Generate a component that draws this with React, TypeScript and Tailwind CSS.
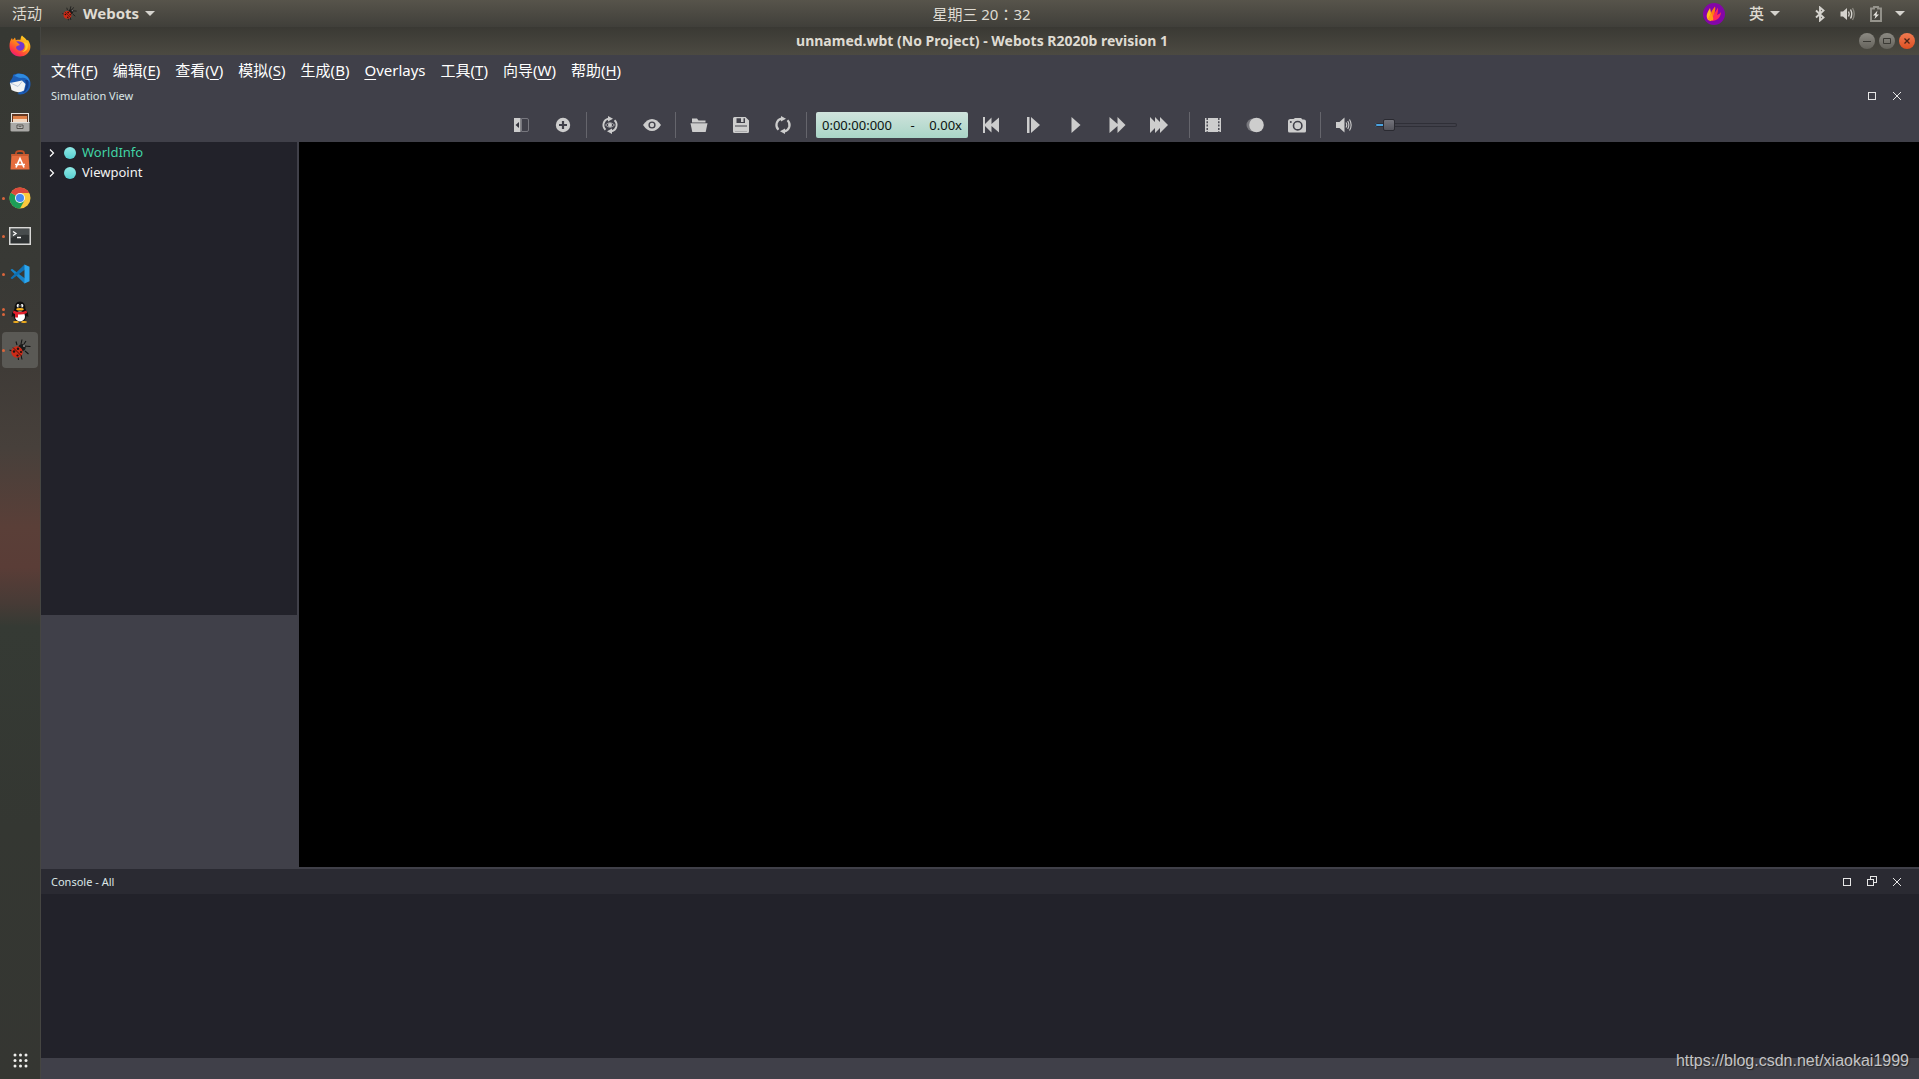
import type { ReactNode } from "react";

const menus = [
  { label: "文件", hotkey: "F" },
  { label: "编辑", hotkey: "E" },
  { label: "查看", hotkey: "V" },
  { label: "模拟", hotkey: "S" },
  { label: "生成", hotkey: "B" },
  { label: "Overlays", hotkey: "" },
  { label: "工具", hotkey: "T" },
  { label: "向导", hotkey: "W" },
  { label: "帮助", hotkey: "H" },
];

const Ladybug = ({ size }: { size: number }) => (
  <svg width={size} height={size} viewBox="0 0 22 22">
    <g stroke="#151515" strokeWidth="1.1" fill="none">
      <path d="M8 6 7 2.5 M12 5 13 0.5 M15 7 21.5 7.5 M16 12 19.5 15 M12 16 13 20.5 M3 12 0.5 11 M9 17 9.5 21 M15 5 17 2" />
    </g>
    <circle cx="13" cy="8.5" r="3.6" fill="#1b1b1b" />
    <circle cx="8" cy="13" r="5.8" fill="#cf2a17" />
    <path d="M4 8.5 12.5 17" stroke="#3a0d08" strokeWidth="0.9" />
    <g fill="#1b1210">
      <circle cx="5" cy="12.5" r="1.2" />
      <circle cx="9" cy="9.8" r="1.2" />
      <circle cx="8.5" cy="16.5" r="1.1" />
      <circle cx="12" cy="13" r="1.1" />
    </g>
    <path d="M9.5 7 Q15 6.5 14 12.5 Q13 8.5 9.5 7Z" fill="#1b1b1b" />
    <circle cx="15" cy="7" r="0.8" fill="#ddd" />
  </svg>
);

const Firefox = () => (
  <svg width="22" height="22" viewBox="0 0 22 22">
    <defs>
      <linearGradient id="fox" x1="0.85" y1="0" x2="0.2" y2="1">
        <stop offset="0" stopColor="#ffe226" />
        <stop offset="0.45" stopColor="#ff8a16" />
        <stop offset="0.8" stopColor="#ff3647" />
        <stop offset="1" stopColor="#e31587" />
      </linearGradient>
    </defs>
    <path
      d="M13 0.5C14.5 2 16.5 3.5 18 5.5L19 5C21 8 21.7 10.5 21.3 13C20.3 18.3 16 21.5 11 21.5C5 21.5 0.5 17 0.5 11C0.5 7.5 1.3 5 3 3L3.8 5L6 2.5L6.8 5.2C8.5 4.5 10 4.7 11.5 4.8C11.7 3 12 1.5 13 0.5Z"
      fill="url(#fox)"
    />
    <path d="M7 6.5 Q11 5.5 14.5 8 Q17 12 13.5 15 Q10 17 7.3 13.5 Q6.5 11.5 8 11 L11 10 Q9 7.5 7 6.5Z" fill="#7138cf" />
    <path d="M14 7C18 10 17 15.5 13 16.8C17.5 17 20 13 18.5 8Z" fill="#ffce2b" />
  </svg>
);

const Thunderbird = () => (
  <svg width="22" height="22" viewBox="0 0 22 22">
    <path d="M4 2C8-0.5 15 0 19 4C22.5 8 22.5 15 18 19C15 21.5 11 22 8 21C14 19 3 14 1 11C0 8 4 6 4 2Z" fill="#1c5cb4" />
    <path d="M8 1C14 0 20 3 20.5 9C18 5 15 4 12 5C9 5 7 3 5 3Z" fill="#2f8be0" />
    <path d="M19 7C21 13 18 18 14 20C17 15 18 11 16 7Z" fill="#143f8c" />
    <path d="M1 10 13 7.5 16.5 11 15 17.5Q9 21 2.5 17Z" fill="#f3f3f3" />
    <path d="M1.5 10 9 13.5 13.5 8" fill="none" stroke="#b9c7da" />
  </svg>
);

const Files = () => (
  <svg width="20" height="20" viewBox="0 0 20 20">
    <path d="M1 1H19V11H1Z" fill="#e4e2df" />
    <path d="M2 2H18V11H2Z" fill="#623823" />
    <path d="M3 4H17V11H3Z" fill="#e08149" />
    <path d="M3 7H17V11H3Z" fill="#f3d8c0" />
    <path d="M0.5 10H19.5V18.5Q19.5 19.5 18 19.5H2Q0.5 19.5 0.5 18.5Z" fill="#aaa9a6" />
    <path d="M0.5 10H19.5V11H0.5Z" fill="#deddda" />
    <path d="M7 13H13V16.5H7Z" fill="#c6c5c3" stroke="#55534f" />
    <path d="M8.5 14.7H11.5" stroke="#55534f" />
  </svg>
);

const Software = () => (
  <svg width="20" height="20" viewBox="0 0 20 20">
    <path d="M6 6V3Q6 1 10 1Q14 1 14 3V6" fill="none" stroke="#c14f25" strokeWidth="1.8" />
    <path d="M1.5 4H18.5L19.5 19.5H0.5Z" fill="#e66d3e" />
    <path d="M1.3 6H18.7L18.5 4H1.5Z" fill="#c95a30" />
    <path d="M6 17.5 10 8.5 14 17.5M5 14.5H15" fill="none" stroke="#fff" strokeWidth="1.7" />
  </svg>
);

const Chrome = () => (
  <svg width="22" height="22" viewBox="0 0 22 22">
    <circle cx="11" cy="11" r="10.5" fill="#fbc93d" />
    <path d="M11 11 1.9 5.7A10.5 10.5 0 0 0 11 21.5L15.5 13.5Z" fill="#1d9d57" />
    <path d="M11 11 1.9 5.7A10.5 10.5 0 0 1 20.3 6H11Z" fill="#dc4a3d" />
    <circle cx="11" cy="11" r="5" fill="#f4f4f4" />
    <circle cx="11" cy="11" r="4" fill="#4587f0" />
  </svg>
);

const Terminal = () => (
  <svg width="22" height="18" viewBox="0 0 22 18">
    <path d="M0 0H22V18H0Z" fill="#d8d8d6" />
    <path d="M1.5 1.5H20.5V16.5H1.5Z" fill="#2e3233" />
    <path d="M2 2H20V8Q11 7 2 11Z" fill="#474c4d" />
    <path d="M4 4.5 7 6.5 4 8.5M8 10.5H12" fill="none" stroke="#fff" strokeWidth="1.3" />
  </svg>
);

const VsCode = () => (
  <svg width="20" height="20" viewBox="0 0 20 20">
    <path d="M0.5 6 2 4.7 15 14.5V19.5L14 19Z" fill="#1783c7" />
    <path d="M0.5 14 2 15.3 15 5.5V0.5L14 1Z" fill="#0f70b3" />
    <path d="M14.5 0.5 19.5 2.7V17.3L14.5 19.5Z" fill="#2ca6ee" />
  </svg>
);

const Penguin = () => (
  <svg width="20" height="22" viewBox="0 0 20 22">
    <path d="M10 0.5Q15.5 0.5 15.5 8Q18.5 11.5 18.5 16L16.5 15Q16 20.5 10 20.5Q4 20.5 3.5 15L1.5 16Q1.5 11.5 4.5 8Q4.5 0.5 10 0.5Z" fill="#101010" />
    <ellipse cx="10" cy="15.5" rx="5" ry="5" fill="#fff" />
    <ellipse cx="8" cy="4.8" rx="1.3" ry="1.8" fill="#fff" />
    <ellipse cx="12" cy="4.8" rx="1.3" ry="1.8" fill="#fff" />
    <circle cx="8.4" cy="5" r="0.6" />
    <circle cx="11.6" cy="5" r="0.6" />
    <ellipse cx="10" cy="8.3" rx="3.8" ry="1.2" fill="#f6b01c" />
    <path d="M3.5 9.5Q10 12.5 16.5 9.5L17 12Q13 14 8 13.5V16.5H5V13L3 12Z" fill="#e0202c" />
    <ellipse cx="6" cy="21" rx="3" ry="1" fill="#f6b01c" />
    <ellipse cx="14" cy="21" rx="3" ry="1" fill="#f6b01c" />
  </svg>
);

const dock = [
  { name: "Firefox", icon: <Firefox />, windows: 0 },
  { name: "Thunderbird", icon: <Thunderbird />, windows: 0 },
  { name: "Files", icon: <Files />, windows: 0 },
  { name: "Software", icon: <Software />, windows: 0 },
  { name: "Chrome", icon: <Chrome />, windows: 1 },
  { name: "Terminal", icon: <Terminal />, windows: 1 },
  { name: "VS Code", icon: <VsCode />, windows: 1 },
  { name: "QQ", icon: <Penguin />, windows: 2 },
  { name: "Webots", icon: <Ladybug size={22} />, windows: 1, active: true },
];

const Caret = () => (
  <svg width="10" height="5" viewBox="0 0 10 5">
    <path d="M0 0H10L5 5Z" fill="#d5d3ce" />
  </svg>
);

const TopBar = () => (
  <header className="flex h-[27px] shrink-0 items-center bg-linear-to-b from-[#57544b] to-[#403f3a] text-[#dfdbd2]">
    <div className="flex flex-1 items-center">
      <button className="pl-3 text-[15px]">活动</button>
      <button className="ml-5 flex items-center font-bold">
        <Ladybug size={15} />
        <span className="mx-[6px] text-[15px]">Webots</span>
        <Caret />
      </button>
    </div>
    {/* the clock is centred over the window, a little right of the bar's middle */}
    <button className="ml-[58px] pt-px font-['Noto_Sans','Noto_Sans_CJK_JP',sans-serif] text-[15px] leading-5">星期三 20：32</button>
    <div className="flex flex-1 items-center justify-end pr-[14px]">
      <button aria-label="Flame" className="mr-6">
        <svg width="22" height="22" viewBox="0 0 22 22">
          <circle cx="11" cy="11" r="11" fill="#8406a8" />
          <path d="M5 17C2 12 5 9 7 5C8 9 8 12 9 14L8 18Z" fill="#ffc21a" />
          <path d="M7 17C6 12 9 7 12 3.5C13 7 11 9 12 12L11 17Z" fill="#ff7a12" />
          <path d="M9 18C9 13 13 8 15 4.500C15 8 15 9 14 12C15 11 17 11 18 9C18 14 14 18 9 18Z" fill="#ff2a5c" />
          <path d="M5 16C6 12 8 12 9 10C9 14 11 14 10 17Q7 19 5 16Z" fill="#ff9d14" />
        </svg>
      </button>
      <button className="flex items-center gap-[6px] text-[15px] font-medium">
        英
        <Caret />
      </button>
      <button aria-label="System" className="ml-[35px] flex items-center">
        <svg width="10" height="16" viewBox="0 0 10 16">
          <path d="M1 4.500 8.500 11.500 5 14.500V1.500L8.500 4.500 1 11.500" fill="none" stroke="#d5d3ce" strokeWidth="1.900" />
        </svg>
        <svg className="ml-[15px]" width="16" height="14" viewBox="0 0 16 14">
          <path d="M0.500 4.500H3L7 1V13L3 9.500H0.500Z" fill="#d5d3ce" />
          <path d="M8.500 4.500Q10 7 8.500 9.500M10.500 2.500Q13 7 10.500 11.500" fill="none" stroke="#d5d3ce" strokeWidth="1.400" />
          <path d="M12.500 1Q16 7 12.500 13" fill="none" stroke="#85837c" strokeWidth="1.400" />
        </svg>
        <svg className="ml-[14px]" width="12" height="16" viewBox="0 0 12 16">
          <path d="M1 2.500H4V1H8V2.500H11V15H1Z" fill="none" stroke="#96948d" strokeWidth="1.900" />
          <path d="M7.500 4.500 3 9.500H5.500L4.500 13 9 8.500H6.500Z" fill="#e5e3de" />
        </svg>
        <span className="ml-[13px]">
          <Caret />
        </span>
      </button>
    </div>
  </header>
);

const Dock = () => (
  <nav className="flex w-[41px] shrink-0 flex-col gap-[2px] border-r border-[#454541] bg-[linear-gradient(#363833_0px,#383935_240px,#3f3b37_340px,#47403b_420px,#5a3f38_500px,#5a3d37_540px,#483b36_575px,#353a34_600px,#343732_800px,#353632_100%)] pt-px">
    {dock.map((app) => (
      <button
        key={app.name}
        aria-label={app.name}
        className={`relative ml-[2px] flex size-9 items-center justify-center rounded ${app.active ? "bg-[#5a5955]" : ""}`}
      >
        {app.icon}
        <span className="absolute left-0 flex flex-col gap-[2px]">
          {Array.from({ length: app.windows }, (_, i) => (
            <span key={i} className="size-[3px] rounded-full bg-[#d9653b]" />
          ))}
        </span>
      </button>
    ))}
    <button aria-label="Show Applications" className="mt-auto mb-2 ml-[2px] flex h-[22px] w-9 items-center justify-center">
      <svg width="15" height="15" viewBox="0 0 15 15" fill="#f0f0ee">
        {[2, 7.5, 13].map((y) => [2, 7.5, 13].map((x) => <circle key={`${x}-${y}`} cx={x} cy={y} r="1.5" />))}
      </svg>
    </button>
  </nav>
);

const TitleBar = () => (
  <div className="flex h-7 shrink-0 items-center bg-linear-to-b from-[#3a3934] to-[#4c4a42] pr-1 pl-2">
    <div className="flex-1" />
    <h1 className="text-sm font-bold text-[#dfdbd2]">unnamed.wbt (No Project) - Webots R2020b revision 1</h1>
    <div className="flex flex-1 justify-end gap-1">
      <button aria-label="Minimize" className="flex size-4 items-center justify-center rounded-full bg-linear-to-b from-[#8c8a83] to-[#65635c]">
        <svg width="16" height="16" viewBox="0 0 16 16">
          <path d="M4 8.5H12" stroke="#3a3934" />
        </svg>
      </button>
      <button aria-label="Maximize" className="flex size-4 items-center justify-center rounded-full bg-linear-to-b from-[#8c8a83] to-[#65635c]">
        <svg width="16" height="16" viewBox="0 0 16 16">
          <path d="M4.5 5.5H11.5V10.5H4.5Z" fill="none" stroke="#3a3934" />
        </svg>
      </button>
      <button aria-label="Close" className="flex size-4 items-center justify-center rounded-full bg-linear-to-b from-[#f07a50] to-[#dd4f20]">
        <svg width="16" height="16" viewBox="0 0 16 16">
          <path d="M5.5 5.5 10.5 10.5M10.5 5.5 5.5 10.5" stroke="#4a2416" strokeWidth="1.3" />
        </svg>
      </button>
    </div>
  </div>
);

const PanelButton = ({ label, children }: { label: string; children: ReactNode }) => (
  <button aria-label={label}>
    <svg width="11" height="11" viewBox="0 0 11 11" fill="none" stroke="#e6e6e6" shapeRendering="crispEdges">
      {children}
    </svg>
  </button>
);

const squarePath = <path d="M1.5 2.5H8.5V9.5H1.5Z" />;
const crossPath = <path d="M1 2 9 10M9 2 1 10" shapeRendering="auto" />;

const ToolButton = ({ label, children }: { label: string; children: ReactNode }) => (
  <button aria-label={label} className="flex h-[26px] w-[42px] items-center justify-center">
    <svg width="18" height="18" viewBox="0 0 18 18" fill="#cdcdcd">
      {children}
    </svg>
  </button>
);

const Separator = () => <div className="mx-[2px] h-[26px] w-px bg-[#65656c]" />;

const Toolbar = () => (
  <div className="flex h-[34px] items-center justify-center pr-[3px]">
    <ToolButton label="Hide scene tree">
      <path d="M2 2H8.5V16H2Z" />
      <path d="M7 6V12L3.5 9Z" fill="#33333b" />
      <path d="M9.5 2.5H15Q16.500 2.500 16.500 4V14Q16.500 15.500 15 15.500H9.500Z" fill="none" stroke="#77777e" />
    </ToolButton>
    <ToolButton label="Add">
      <circle cx="9" cy="9" r="7.2" />
      <path d="M9 5V13M5 9H13" stroke="#404049" strokeWidth="2.2" />
    </ToolButton>
    <Separator />
    <ToolButton label="Restore viewpoint">
      <path d="M7.5 2.6A6.5 6.5 0 0 0 4.5 13.7M10.5 15.4A6.5 6.5 0 0 0 13.5 4.3" fill="none" stroke="#cdcdcd" strokeWidth="1.9" />
      <path d="M7 0 12 2.8 7 5.6ZM11 12.4V18L6 15.2Z" />
      <path d="M4.5 9Q9 4.5 13.5 9Q9 13.5 4.5 9Z" fill="none" stroke="#a5a5aa" />
      <circle cx="9" cy="9" r="2" />
    </ToolButton>
    <ToolButton label="View">
      <path d="M0 9Q4 3 9 3T18 9Q14 15 9 15T0 9Z" />
      <circle cx="9" cy="9" r="3.6" fill="#404049" />
      <circle cx="9" cy="9" r="2.2" />
    </ToolButton>
    <Separator />
    <ToolButton label="Open world">
      <path d="M2 2.5H7L8.5 4.5H15.5V6.500H2Z" />
      <path d="M0.5 7.3H17.5L15.7 16H2.3Z" />
    </ToolButton>
    <ToolButton label="Save world">
      <path fillRule="evenodd" d="M2.5 1H13.5L17 4.5V15.5Q17 17 15.5 17H2.5Q1 17 1 15.5V2.5Q1 1 2.5 1ZM4.5 2.2V7H13V2.2ZM3 9.5V15.5H15V9.5Z" />
      <path d="M9 2H11.5V6H9ZM3 10.5H15V15.5H3Z" />
    </ToolButton>
    <ToolButton label="Reload world">
      <path d="M7.5 2.6A6.5 6.5 0 0 0 4.5 13.7M10.5 15.4A6.5 6.5 0 0 0 13.5 4.3" fill="none" stroke="#cdcdcd" strokeWidth="2.2" />
      <path d="M7 0 12 2.8 7 5.6ZM11 12.4V18L6 15.2Z" />
    </ToolButton>
    <Separator />
    <div className="mr-[2px] ml-[7px] flex h-[26px] w-[152px] items-center justify-between rounded-xs bg-linear-to-b from-[#cfe3dc] to-[#a9d5c7] px-[6px] pt-[2px] text-[13px] text-[#0c1412]">
      <span>0:00:00:000</span>
      <span className="pl-1">-</span>
      <span>0.00x</span>
    </div>
    <ToolButton label="Reset simulation">
      <path d="M1 1H3V8L9.5 1.5V8L17 1.5V16.5L9.5 10V16.5L3 10V17H1Z" />
    </ToolButton>
    <ToolButton label="Step">
      <path d="M3 1H5.500V17H3ZM7 1 16 9 7 17Z" />
    </ToolButton>
    <ToolButton label="Run">
      <path d="M5.500 1 14.500 9 5.500 17Z" />
    </ToolButton>
    <ToolButton label="Run faster">
      <path d="M1.500 1 9.500 8V1L17.500 9 9.500 17V10L1.500 17Z" />
    </ToolButton>
    <ToolButton label="Fast mode">
      <path d="M0 1 5 6V1L10 6V1L18 9 10 17V12L5 17V12L0 17Z" />
    </ToolButton>
    <div className="w-[7px]" />
    <Separator />
    <ToolButton label="Make movie">
      <path d="M1 2H17V16H1Z" />
      <path d="M3.2 2V16M14.8 2V16" stroke="#404049" strokeWidth="1.4" strokeDasharray="2 1.3" />
    </ToolButton>
    <ToolButton label="Record animation">
      <circle cx="7" cy="9" r="6.5" fill="#77777d" />
      <circle cx="10.500" cy="9" r="7.300" />
    </ToolButton>
    <ToolButton label="Screenshot">
      <path d="M2 3H5.5L7 2H13L14.5 3.5H16Q18 3.5 18 5.5V15Q18 16.5 16.5 16.5H1.5Q0 16.5 0 15V5Q0 3.5 2 3Z" />
      <circle cx="9.7" cy="9.7" r="4.2" fill="none" stroke="#404049" strokeWidth="1.6" />
      <circle cx="2.8" cy="6" r="1" fill="#404049" />
    </ToolButton>
    <Separator />
    <ToolButton label="Sound">
      <path d="M1 6H4.5L9.5 1.5V16.5L4.5 12H1Z" />
      <path d="M11 6.5Q12.5 9 11 11.5M12.7 5Q15 9 12.7 13M14.5 3.5Q17.8 9 14.5 14.5" fill="none" stroke="#cdcdcd" strokeWidth="1.1" />
    </ToolButton>
    <input
      type="range"
      aria-label="Volume"
      defaultValue={12}
      className="ml-[10px] h-3 w-[82px] appearance-none bg-transparent [&::-webkit-slider-runnable-track]:h-1 [&::-webkit-slider-runnable-track]:rounded-xs [&::-webkit-slider-runnable-track]:bg-[linear-gradient(90deg,#4aa3e0_10px,transparent_10px)] [&::-webkit-slider-runnable-track]:shadow-[inset_0_0_0_1px_#2f2f37] [&::-webkit-slider-thumb]:-mt-1 [&::-webkit-slider-thumb]:size-3 [&::-webkit-slider-thumb]:appearance-none [&::-webkit-slider-thumb]:rounded-xs [&::-webkit-slider-thumb]:border [&::-webkit-slider-thumb]:border-[#2a2a31] [&::-webkit-slider-thumb]:bg-linear-to-b [&::-webkit-slider-thumb]:from-[#74747c] [&::-webkit-slider-thumb]:to-[#55555d]"
    />
  </div>
);

const TreeItem = ({ name, color }: { name: string; color: string }) => (
  <li>
    <button className={`flex h-5 items-center pl-2 text-[13px] ${color}`}>
      <svg width="6" height="8" viewBox="0 0 6 8">
        <path d="M1 0.5 4.5 4 1 7.5" fill="none" stroke="#fff" strokeWidth="1.2" />
      </svg>
      <span className="mr-[6px] ml-[9px] size-3 rounded-full bg-linear-to-b from-[#8feae6] to-[#55cfd2]" />
      {name}
    </button>
  </li>
);

export default function App() {
  return (
    <div className="flex h-screen flex-col overflow-hidden bg-[#404049] font-['Noto_Sans','Noto_Sans_CJK_SC',sans-serif] text-white">
      <TopBar />
      <div className="flex min-h-0 flex-1">
        <Dock />
        <main className="flex min-w-0 flex-1 flex-col">
          <TitleBar />
          <nav className="flex h-[31px] shrink-0 items-center gap-[15px] pl-[10px] text-[15px]">
            {menus.map((menu) => (
              <button key={menu.label}>
                {menu.hotkey ? (
                  <>
                    {menu.label}(<u className="underline-offset-3">{menu.hotkey}</u>)
                  </>
                ) : (
                  <>
                    <u className="underline-offset-3">O</u>verlays
                  </>
                )}
              </button>
            ))}
          </nav>
          <div className="flex h-[22px] shrink-0 items-center justify-between pr-4 pb-[2px] pl-[10px] text-[11px] text-[#dbe6e6]">
            <h2>Simulation View</h2>
            <div className="flex gap-[14px] pb-[2px]">
              <PanelButton label="Maximize view">{squarePath}</PanelButton>
              <PanelButton label="Close view">{crossPath}</PanelButton>
            </div>
          </div>
          <Toolbar />
          <div className="flex min-h-0 flex-1">
            <aside className="mr-[2px] flex w-64 shrink-0 flex-col">
              <ul className="flex-1 bg-[#22222a] pt-px">
                <TreeItem name="WorldInfo" color="text-[#41d4a5]" />
                <TreeItem name="Viewpoint" color="text-[#f2f2f2]" />
              </ul>
              <div className="h-[254px]" />
            </aside>
            <div className="mb-[2px] flex-1 bg-black" />
          </div>
          <section className="shrink-0">
            <div className="flex h-[25px] items-center justify-between bg-[#2a2a32] pr-4 pl-[10px] text-[11px] text-[#dbe6e6]">
              <h2 className="pt-[2px]">Console - All</h2>
              <div className="flex gap-[14px]">
                <PanelButton label="Maximize console">{squarePath}</PanelButton>
                <PanelButton label="Undock console">
                  <path d="M0.5 3.5H6.5V9.5H0.5ZM3.5 3V0.5H9.5V6.5H7" />
                </PanelButton>
                <PanelButton label="Close console">{crossPath}</PanelButton>
              </div>
            </div>
            <div className="h-[164px] bg-[#22222a]" />
          </section>
          <footer className="relative h-[21px] shrink-0">
            <a
              href="https://blog.csdn.net/xiaokai1999"
              className="absolute right-[10px] bottom-2 font-['Liberation_Sans',sans-serif] text-base leading-5 text-[#c4c4c6] [text-shadow:1px_1px_1px_#222]"
            >
              https://blog.csdn.net/xiaokai1999
            </a>
          </footer>
        </main>
      </div>
    </div>
  );
}
